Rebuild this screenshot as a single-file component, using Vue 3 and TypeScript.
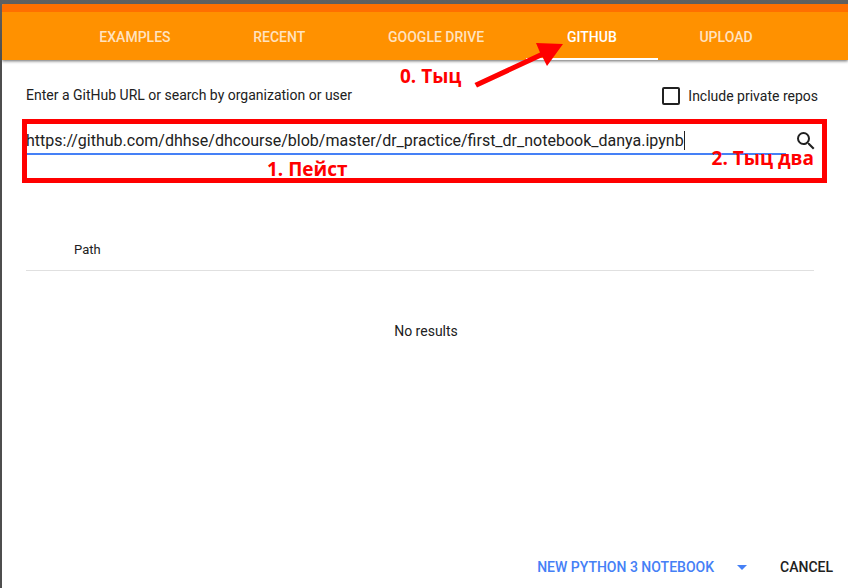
<script setup lang="ts">
import { ref } from 'vue'

const tabs: string[] = ['Examples', 'Recent', 'Google Drive', 'GitHub', 'Upload']
const active = ref<string>('GitHub')
const query = ref<string>('https://github.com/dhhse/dhcourse/blob/master/dr_practice/first_dr_notebook_danya.ipynb')
const includePrivate = ref<boolean>(false)
</script>

<template>
  <div class="backdrop">
    <main class="dialog">
      <header class="header">
        <nav class="tabs" role="tablist">
          <button
            v-for="tab in tabs"
            :key="tab"
            type="button"
            role="tab"
            class="tab"
            :class="{ active: tab === active }"
            :aria-selected="tab === active"
            @click="active = tab"
          >{{ tab }}</button>
        </nav>
      </header>

      <section class="content">
        <div class="prompt">
          <label for="repo-query">Enter a GitHub URL or search by organization or user</label>
          <label class="private">
            <input v-model="includePrivate" type="checkbox" class="check" />
            <span>Include private repos</span>
          </label>
        </div>

        <div class="search">
          <div class="field">
            <input id="repo-query" v-model="query" type="text" class="query" spellcheck="false" />
          </div>
          <button type="button" class="search-button" aria-label="Search">
            <svg viewBox="0 0 24 24" width="24" height="24" aria-hidden="true">
              <path
                fill="currentColor"
                d="M15.5 14h-.79l-.28-.27A6.471 6.471 0 0 0 16 9.500 6.500 6.500 0 1 0 9.500 16c1.610 0 3.090-.59 4.230-1.570l.27.28v.79l5 4.990L20.490 19l-4.990-5zm-6 0C7.010 14 5 11.990 5 9.500S7.010 5 9.500 5 14 7.010 14 9.500 11.990 14 9.500 14z"
              />
            </svg>
          </button>
          <div class="frame"></div>
          <span class="note note-paste">1. Пейст</span>
          <span class="note note-submit">2. Тыц два</span>
        </div>

        <table class="results">
          <thead>
            <tr><th scope="col">Path</th></tr>
          </thead>
          <tbody>
            <tr><td>No results</td></tr>
          </tbody>
        </table>
      </section>

      <footer class="actions">
        <button type="button" class="action primary">New Python 3 Notebook</button>
        <button type="button" class="action menu" aria-label="More notebook types">
          <svg viewBox="0 0 10 5" width="10" height="5" aria-hidden="true">
            <path fill="currentColor" d="M0 0h10L5 5z" />
          </svg>
        </button>
        <button type="button" class="action">Cancel</button>
      </footer>

      <span class="note note-tab">0. Тыц</span>
      <svg class="arrow" viewBox="0 0 92 46" width="92" height="46" aria-hidden="true">
        <path fill="#ff0000" d="M0.500 40L66 9.500L62 0L89 1L73 23L68.500 14L3 44.500z" />
      </svg>
    </main>
  </div>
</template>

<style>
body {
  background: #5b5b5b;
}
</style>

<style scoped>
.backdrop {
  box-sizing: border-box;
  min-height: 100vh;
  padding: 4px 0 0 2px;
  display: flex;
  background: linear-gradient(#606060, #4e4e4e 60px);
  color: #212121;
  font: 14px/20px Roboto, sans-serif;
}
.dialog {
  position: relative;
  flex: 1;
  min-width: 0;
  display: flex;
  flex-direction: column;
  background: #fff;
  border-top-left-radius: 2px;
  overflow: hidden;
}
button {
  padding: 0;
  border: 0;
  background: none;
  color: inherit;
  font: inherit;
  cursor: pointer;
}
.header {
  padding: 0 54px 0 56px;
  border-top: 8px solid #ff6f00;
  background: #ff9100;
  box-shadow: 0 1px 3px rgba(0, 0, 0, 0.6);
}
.tabs {
  display: flex;
  height: 48px;
}
.tab {
  flex: 1 1 auto;
  padding-top: 1px;
  border: solid transparent;
  border-width: 2px 0;
  color: rgba(255, 255, 255, 0.76);
  font-weight: 500;
  text-transform: uppercase;
}
.tab.active {
  border-bottom-color: #fff;
  color: #fff;
}
.content {
  flex: 1;
  padding: 24px 24px 0;
}
.prompt {
  display: flex;
  align-items: flex-start;
  justify-content: space-between;
  height: 24px;
  padding: 1px 6px 0 0;
  box-sizing: border-box;
}
.private {
  display: flex;
  align-items: center;
  gap: 8px;
  padding-top: 1px;
}
.check {
  appearance: none;
  width: 18px;
  height: 18px;
  margin: 0;
  border: 2px solid #212121;
  border-radius: 2px;
}
.check:checked {
  background: #212121;
}
.search {
  position: relative;
  display: flex;
  align-items: flex-start;
  justify-content: space-between;
  height: 48px;
  margin-top: 20px;
  padding-right: 6px;
}
.field {
  display: flex;
  align-items: center;
  flex: 1;
  min-width: 0;
  height: 25px;
  margin-right: 8px;
  border-bottom: 2px solid #4580f6;
}
.field::after {
  content: '';
  width: 1px;
  height: 19px;
  background: #212121;
}
.query {
  field-sizing: content;
  min-width: 1px;
  max-width: 100%;
  height: 24px;
  padding: 0;
  border: 0;
  outline: 0;
  background: none;
  color: #212121;
  font: 16px/24px Roboto, sans-serif;
}
.search-button {
  width: 24px;
  height: 24px;
  margin-top: 1px;
}
.search-button svg {
  display: block;
}
.frame {
  position: absolute;
  inset: -9px -3px -7px -4px;
  border: 5px solid #ff0000;
  pointer-events: none;
}
.note {
  position: absolute;
  color: #ff0000;
  font: 700 19px/24px "Open Sans", sans-serif;
  white-space: nowrap;
  pointer-events: none;
}
.note-paste {
  top: 29px;
  left: 241px;
}
.note-submit {
  top: 18px;
  right: 10px;
}
.note-tab {
  top: 60px;
  left: 398px;
}
.arrow {
  position: absolute;
  top: 39px;
  left: 472px;
  pointer-events: none;
}
.results {
  width: calc(100% - 10px);
  margin-top: 52px;
  border-collapse: collapse;
  font-size: 14px;
}
.results th {
  height: 40px;
  padding: 2px 48px 0;
  border-bottom: 1px solid #e0e0e0;
  font-size: 13px;
  font-weight: 400;
  text-align: left;
}
.results td {
  height: 120px;
  padding: 0 0 0 12px;
  text-align: center;
}
.actions {
  display: flex;
  align-items: center;
  justify-content: flex-end;
  height: 42px;
  padding-right: 15px;
}
.action {
  font-weight: 500;
  text-transform: uppercase;
}
.primary,
.menu {
  color: #4580f6;
}
.menu {
  display: flex;
  align-items: center;
  justify-content: center;
  width: 56px;
  height: 36px;
  margin-right: 10px;
}
</style>
